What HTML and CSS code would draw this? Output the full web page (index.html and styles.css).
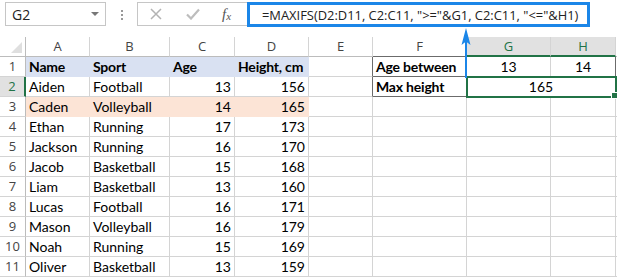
FILE: index.html
```html
<!DOCTYPE html>
<html lang="en">
<head>
    <meta charset="UTF-8">
    <meta name="viewport" content="width=device-width, initial-scale=1.0">
    <title>MAXIFS example</title>
    <link rel="stylesheet" href="styles.css">
</head>
<body>
    <div class="toolbar">
        <div class="namebox"><span>G2</span><span class="caret"></span></div>
        <div class="grip"><i></i><i></i><i></i></div>
        <div class="fxbox">
            <svg class="ico-x" width="12" height="12" viewBox="0 0 12 12">
                <path d="M1 1 L11 11 M11 1 L1 11" stroke="#b3b3b3" stroke-width="1.5" fill="none"/>
            </svg>
            <svg class="ico-ok" width="14" height="12" viewBox="0 0 14 12">
                <path d="M1 6.5 L5 10.5 L13 1.5" stroke="#bdbdbd" stroke-width="2.2" fill="none"/>
            </svg>
            <span class="fx">f<sub>x</sub></span>
        </div>
        <div class="formula">=MAXIFS(D2:D11, C2:C11, "&gt;="&amp;G1, C2:C11, "&lt;="&amp;H1)</div>
    </div>

    <div id="sheet" class="sheet"></div>

    <!-- arrow from the formula bar down to G2 -->
    <svg class="pointer" width="10" height="52" viewBox="0 0 10 52">
        <rect x="4" y="10" width="2" height="42" fill="#1b86e8"/>
        <path d="M5 2 L9.5 19 L5 15.5 L0.5 19 Z" fill="#1b86e8"/>
    </svg>

    <script>
        const people = [
            ['Name', 'Sport', 'Age', 'Height, cm'],
            ['Aiden', 'Football', 13, 156],
            ['Caden', 'Volleyball', 14, 165],
            ['Ethan', 'Running', 17, 173],
            ['Jackson', 'Running', 16, 170],
            ['Jacob', 'Basketball', 15, 168],
            ['Liam', 'Basketball', 13, 160],
            ['Lucas', 'Football', 16, 171],
            ['Mason', 'Volleyball', 16, 179],
            ['Noah', 'Running', 15, 169],
            ['Oliver', 'Basketball', 13, 159]
        ];
        const letters = ['A', 'B', 'C', 'D', 'E', 'F', 'G', 'H', ''];
        const sheet = document.getElementById('sheet');

        function cell(text, cls) {
            const d = document.createElement('div');
            d.className = 'cell ' + (cls || '');
            d.textContent = text;
            sheet.appendChild(d);
            return d;
        }

        // column headers
        const corner = cell('', 'corner');
        corner.innerHTML = '<span class="tri"></span>';
        letters.forEach(l => {
            let cls = 'ch';
            if (l === 'G' || l === 'H') cls += ' ch-on';
            if (l === 'F') cls += ' dk-b';
            cell(l, cls);
        });

        people.forEach((p, i) => {
            const n = i + 1;
            cell(n, n === 2 ? 'rh rh-on' : 'rh');

            let fill = '';
            if (n === 1) fill = ' blue b';
            if (n === 3) fill = ' peach';
            const num = n === 1 ? '' : ' num';

            cell(p[0], fill);
            cell(p[1], fill);
            cell(p[2], num + fill);
            cell(p[3], num + fill);

            if (n === 1) {
                cell('', 'dk-r');
                cell('Age between', 'b dk-r dk-b');
                cell('13', 'mid dk-b');
                cell('14', 'mid dk-b dk-r');
                cell('', '');
            } else if (n === 2) {
                cell('', 'dk-r');
                cell('Max height', 'b dk-r dk-b');
                cell('165', 'mid sel');
                cell('', '');
            } else {
                for (let k = 0; k < 5; k++) cell('', '');
            }
        });
    </script>
</body>
</html>
```

FILE: styles.css
```css
:root {
    --grid: #d4d4d4;
    --head-line: #bcbcbc;
    --green: #217346;
    --blue: #1b86e8;
    --fill-blue: #d9e1f2;
    --fill-peach: #fce4d6;
}

body {
    margin: 0;
    background: #fff;
    font-family: Lato, 'Liberation Sans', sans-serif;
    color: #000;
    overflow: hidden;
    position: relative;
}

/* formula bar */
.toolbar {
    display: flex;
    align-items: flex-start;
    height: 37px;
    padding: 2px 0 0 5px;
    box-sizing: border-box;
    font-family: 'Open Sans', sans-serif;
    color: #222;
}

.namebox {
    width: 101px;
    height: 24px;
    box-sizing: border-box;
    border: 1px solid #c6c6c6;
    display: flex;
    align-items: center;
    justify-content: space-between;
    padding: 0 6px;
    font-size: 14px;
}

.caret {
    width: 0;
    height: 0;
    border-left: 4px solid transparent;
    border-right: 4px solid transparent;
    border-top: 4px solid #777;
}

.grip {
    display: flex;
    flex-direction: column;
    gap: 2px;
    margin: 8px 14px 0 15px;
}

.grip i {
    width: 2px;
    height: 2px;
    background: #999;
}

.fxbox {
    width: 110px;
    height: 24px;
    box-sizing: border-box;
    border: 1px solid #c6c6c6;
    border-right: none;
    display: flex;
    align-items: center;
}

.ico-x {
    margin-left: 12px;
}

.ico-ok {
    margin-left: 24px;
}

.fx {
    margin-left: 22px;
    font-family: 'Liberation Serif', serif;
    font-style: italic;
    font-size: 15px;
    color: #555;
}

.fx sub {
    font-size: 11px;
    vertical-align: -1px;
}

.formula {
    width: 343px;
    height: 25px;
    box-sizing: border-box;
    border: 3px solid var(--blue);
    padding: 1px 0 0 12px;
    font-size: 12.9px;
    line-height: 19px;
    white-space: nowrap;
    overflow: hidden;
}

/* worksheet */
.sheet {
    display: grid;
    grid-template-columns: 26px 64px 80px 65px 74px 64px 94px 84px 65px 1fr;
    grid-auto-rows: 20px;
}

.cell {
    box-sizing: border-box;
    border-right: 1px solid var(--grid);
    border-bottom: 1px solid var(--grid);
    padding: 0 3px;
    font-size: 14px;
    line-height: 19px;
    white-space: nowrap;
    overflow: hidden;
}

.ch,
.rh {
    font-family: 'Open Sans', sans-serif;
    font-size: 13px;
    color: #444;
    text-align: center;
    padding: 0;
}

.ch {
    border-bottom-color: var(--head-line);
}

.rh {
    border-right-color: var(--head-line);
}

.corner {
    display: flex;
    justify-content: flex-end;
    align-items: flex-end;
    padding: 0 3px 3px 0;
    border-right-color: var(--head-line);
    border-bottom-color: var(--head-line);
}

.tri {
    width: 0;
    height: 0;
    border-left: 11px solid transparent;
    border-bottom: 11px solid #dfdfdf;
}

.ch-on {
    background: #e1e1e1;
    color: var(--green);
    border-bottom: 2px solid var(--green);
}

.rh-on {
    background: #e1e1e1;
    color: var(--green);
    border-right: 2px solid var(--green);
}

.b {
    font-weight: bold;
    letter-spacing: -0.2px;
}

.num {
    text-align: right;
}

.mid {
    text-align: center;
}

.blue {
    background: var(--fill-blue);
    border-color: var(--fill-blue);
}

.peach {
    background: var(--fill-peach);
    border-color: var(--fill-peach);
}

.dk-r {
    border-right-color: #6b6b6b;
}

.dk-b {
    border-bottom-color: #6b6b6b;
}

.sel {
    grid-column: span 2;
    position: relative;
    z-index: 1;
    outline: 2px solid var(--green);
    outline-offset: -1px;
    overflow: visible;
}

.sel::after {
    content: '';
    position: absolute;
    right: -3px;
    bottom: -3px;
    width: 5px;
    height: 5px;
    background: var(--green);
    border: 1px solid #fff;
}

.pointer {
    position: absolute;
    left: 461px;
    top: 26px;
    z-index: 2;
}
```
